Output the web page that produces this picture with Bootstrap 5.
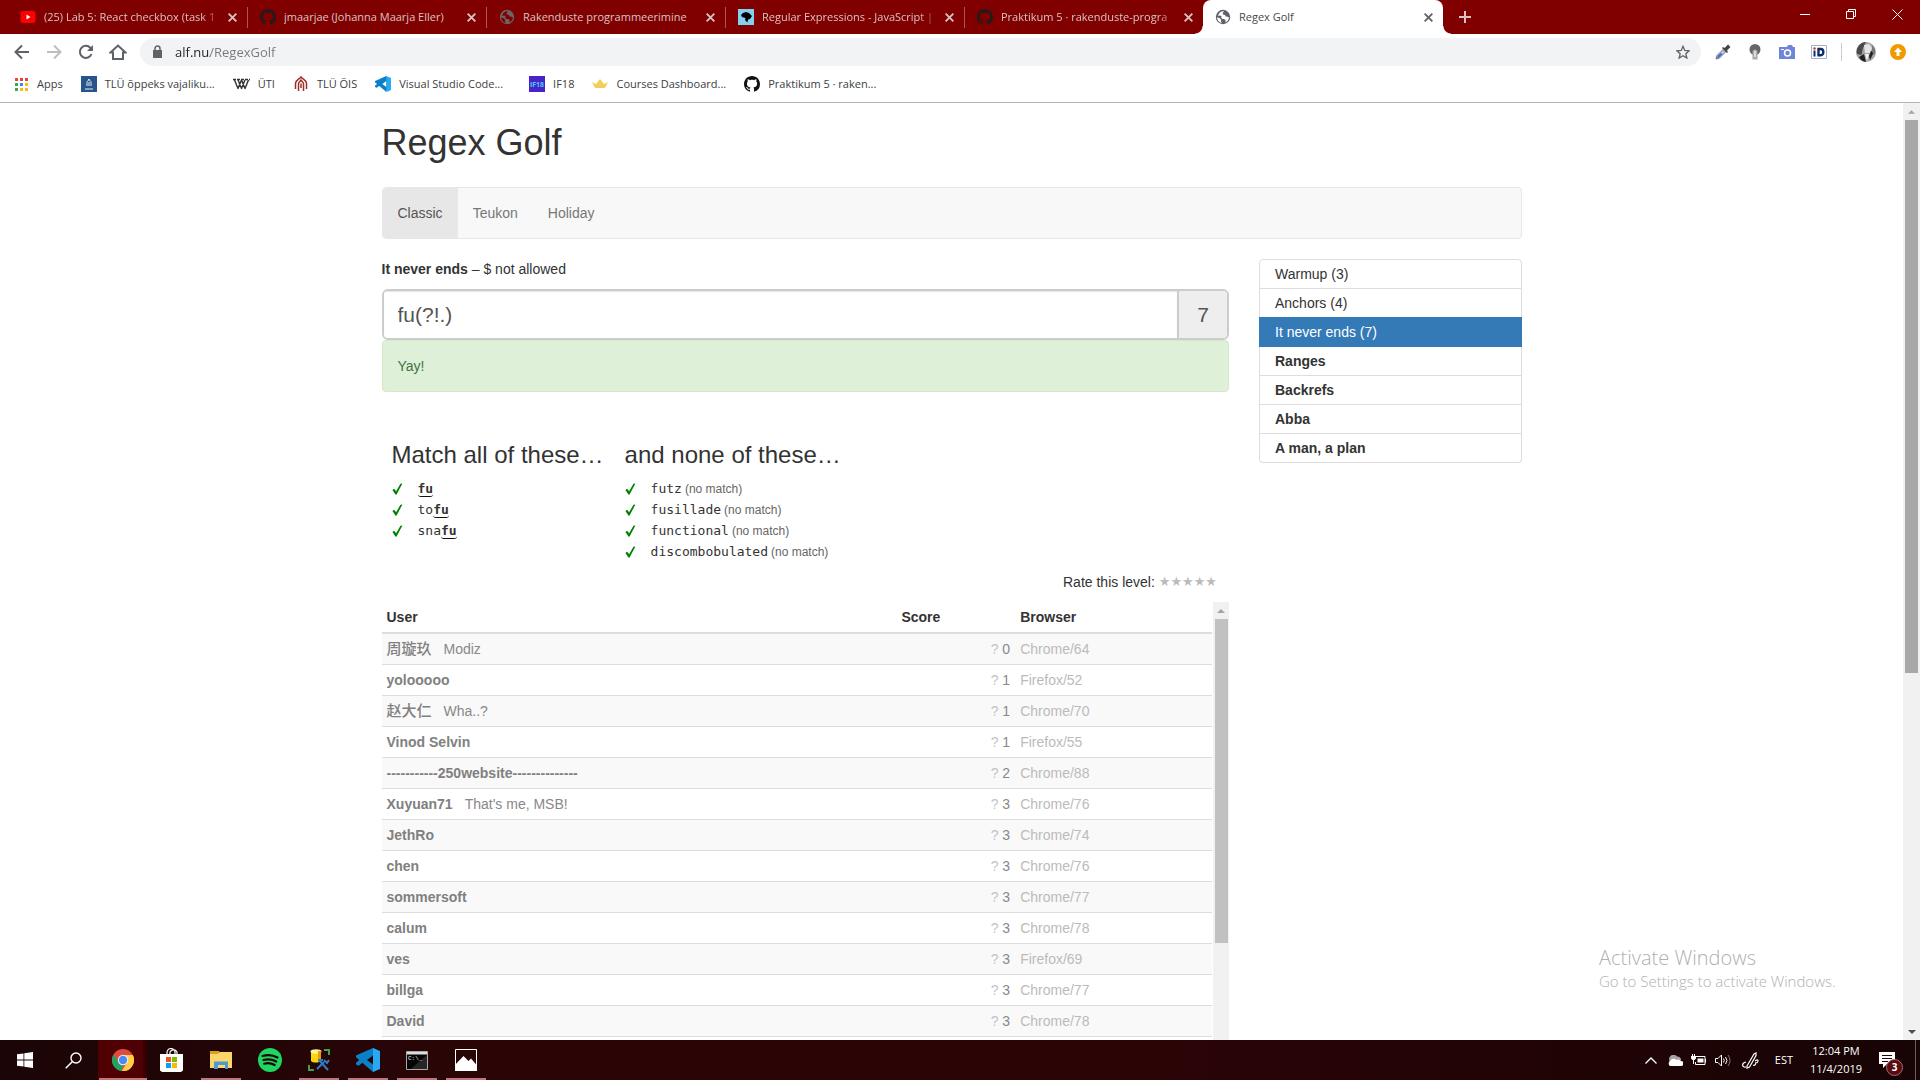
<!DOCTYPE html>
<html lang="en">
<head>
<meta charset="utf-8">
<meta name="viewport" content="width=device-width, initial-scale=1">
<title>Regex Golf</title>
<link href="https://cdn.jsdelivr.net/npm/bootstrap@5.3.0/dist/css/bootstrap.min.css" rel="stylesheet">
<script src="https://cdn.jsdelivr.net/npm/bootstrap@5.3.0/dist/js/bootstrap.bundle.min.js"></script>
<style>
  :root { --ui: "Open Sans", "Noto Sans", sans-serif; --page: "Liberation Sans", Arial, "Noto Sans CJK SC", sans-serif; }
  body { font-family: var(--page); font-size: 14px; line-height: 20px; color: #333; }
  svg { display: block; flex: none; }
  button { line-height: inherit; }
  .chrome-ui { font-family: var(--ui); font-size: 11px; line-height: 16px; }

  /* tab strip */
  .tabstrip { background: #800000; height: 34px; }
  .tab { width: 239px; flex: 0 1 239px; padding: 0 9px 0 12px; color: #d9c3c3; position: relative; }
  .tab + .tab:not(.current) { border-left: 1px solid #a95757; border-image: linear-gradient(transparent 22%, #a95757 22%, #a95757 80%, transparent 80%) 1; }
  .tab-title { flex: 1 1 0; overflow: hidden; white-space: nowrap; margin: 0 4px 0 8px; color: inherit; text-decoration: none; }
  .tab-title.fades { -webkit-mask-image: linear-gradient(90deg, #000 88%, transparent); }
  .tab.current { background: #fff; color: #45484c; border-radius: 8px 8px 0 0; flex-basis: 240px; }
  .tab.current::before, .tab.current::after { content: ""; position: absolute; bottom: 0; width: 8px; height: 8px; }
  .tab.current::before { left: -8px; background: radial-gradient(circle at 0 0, transparent 7px, #fff 8px); }
  .tab.current::after { right: -8px; background: radial-gradient(circle at 100% 0, transparent 7px, #fff 8px); }
  .plain { border: 0; background: none; padding: 0; color: inherit; display: flex; align-items: center; justify-content: center; flex: none; }
  .win-btn { width: 46px; height: 28px; color: #fff; }

  /* toolbar */
  .toolbar { height: 36px; color: #5f6368; padding: 0 14px; gap: 14px; }
  .toolbar-end { gap: 14px; }
  .divider { width: 1px; height: 18px; background: #ccc; }
  .omnibox { background: #f1f3f4; border-radius: 14px; height: 28px; padding: 0 11px 0 12px; }
  .omnibox input { border: 0; outline: 0; width: 100%; font-size: 13px; color: transparent; background: linear-gradient(90deg, #202124 35px, #77797c 35px); -webkit-background-clip: text; background-clip: text; }
  .tool-btn { width: 16px; height: 20px; }
  .bookmarks { height: 33px; padding: 0 14px 4px; gap: 18px; border-bottom: 1px solid #b6b4b6; color: #3c4043; }
  .bookmarks a { color: inherit; text-decoration: none; gap: 8px; white-space: nowrap; flex: none; }

  /* scrollbars */
  .rail { background: #f1f1f1; color: #505050; flex: none; }
  .rail-cap { height: 17px; }
  .page-rail { width: 17px; }
  .page-thumb { background: #a8a8a8; flex: 0 0 59%; margin: 0 2px; }
  .box-rail { width: 16px; }
  .box-thumb { background: #c1c1c1; flex: 0 0 324px; margin: 0 1px 0 2px; }

  /* page */
  .golf { max-width: 1170px; padding: 20px 15px 0; }
  h1 { font-size: 36px; line-height: 40px; font-weight: 400; margin-bottom: 24px; }
  h2 { font-size: 24px; line-height: 26px; font-weight: 400; margin-bottom: 10px; }
  .golf-nav { background: #f8f8f8; border: 1px solid #e7e7e7; border-radius: 4px; min-height: 52px; overflow: hidden; margin-bottom: 20px; }
  .golf-nav .nav-link { padding: 15px; color: #777; }
  .golf-nav .nav-link.active { background: #e7e7e7; color: #555; }
  .golf-row { --bs-gutter-x: 30px; }
  .entry { height: 51px; margin-top: 10px; border: 2px solid #ccc; border-radius: 6px; overflow: hidden; font-size: 21px; color: #555; }
  .entry input { border: 0; padding: 0 14px; font-size: 21px; color: #555; box-shadow: inset 0 1px 1px rgba(0,0,0,.1); border-radius: 0; }
  .entry output { width: 50px; background: #eee; border-left: 2px solid #ccc; }
  .golf-alert { background: #dff0d8; color: #3c763d; border: 1px solid #d6e9c6; border-radius: 4px; padding: 15px; }
  .words { padding: 50px 10px 10px; gap: 21px; }
  .words li { height: 21px; gap: 15px; }
  .word { font-family: "DejaVu Sans Mono", monospace; font-size: 13px; }
  .word b { border-bottom: 1px solid #111; border-radius: 3px; }
  .nomatch { font-size: 12px; color: #666; margin-left: -12px; }
  .rate { padding-right: 12px; margin-bottom: 10px; }
  .rate button { font-family: "DejaVu Sans", sans-serif; font-size: 13px; color: #bbb; display: inline; }
  .scorebox { height: 500px; gap: 1px; }
  .scores { table-layout: fixed; --bs-table-striped-bg: #f9f9f9; --bs-table-striped-color: #888; margin: 0; border-color: #ddd; }
  .scores > :not(caption) > * > * { padding: 5px; color: #888; }
  .scores > thead > tr > th { padding: 5px; color: #333; border-bottom: 2px solid #ddd; }
  .scores > tbody > tr > td:last-child { color: #bbb; }
  .scores > tbody > tr > td b { margin-right: 12px; color: #808080; }
  .scores b:lang(zh) { font-size: 15px; line-height: 16px; font-weight: 500; font-family: "Noto Sans CJK SC", sans-serif; }
  .scores i { font-style: normal; color: #c4c4c4; }
  .levels { --bs-list-group-border-color: #ddd; --bs-list-group-color: #333; --bs-list-group-action-color: #333; --bs-list-group-border-radius: 4px; --bs-list-group-active-bg: #337ab7; --bs-list-group-active-border-color: #337ab7; --bs-list-group-item-padding-x: 15px; --bs-list-group-item-padding-y: 4px; }
  .watermark { right: 68px; bottom: 48px; color: #b0b0b0; font-family: var(--ui); width: 253px; font-size: 15px; line-height: 22px; font-weight: 300; }
  .watermark strong { display: block; font-size: 20px; font-weight: 300; line-height: 24px; }

  /* taskbar */
  .taskbar { height: 40px; background: linear-gradient(90deg, #1b0506, #2b0506 25%, #2b0406 60%, #170405); color: #fff; font-family: var(--ui); font-size: 11px; }
  .task { width: 49px; height: 40px; position: relative; }
  .task.open::after { content: ""; position: absolute; left: 5px; right: 4px; bottom: 0; height: 2px; background: #bd777d; }
  .task.focused { background: linear-gradient(90deg, #500003 45px, #380003 45px); }
  .task.focused::after { left: 1px; right: 0; }
  .tray { gap: 8px; }
  .clock { line-height: 18px; width: 54px; }
  .notice { width: 24px; height: 24px; position: relative; }
  .notice-count { position: absolute; left: 11px; top: 11px; width: 17px; height: 17px; border-radius: 50%; background: #5b0a0e; border: 1px solid #a07074; font-size: 10px; line-height: 14px; font-weight: 700; }
  .peek { width: 5px; height: 40px; border-left: 1px solid #6b5c5d; }
</style>
</head>
<body class="vh-100 d-flex flex-column overflow-hidden bg-white">

<svg width="0" height="0" class="position-absolute" aria-hidden="true">
  <symbol id="octo" viewBox="0 0 16 16"><path fill="currentColor" d="M8 0C3.58 0 0 3.58 0 8c0 3.54 2.29 6.53 5.47 7.59.4.07.55-.17.55-.38 0-.19-.01-.82-.01-1.49-2.01.37-2.53-.49-2.69-.94-.09-.23-.48-.94-.82-1.13-.28-.15-.68-.52-.01-.53.63-.01 1.08.58 1.23.82.72 1.21 1.87.87 2.33.66.07-.52.28-.87.51-1.07-1.78-.2-3.64-.89-3.64-3.95 0-.87.31-1.59.82-2.15-.08-.2-.36-1.02.08-2.12 0 0 .67-.21 2.2.82.64-.18 1.32-.27 2-.27s1.36.09 2 .27c1.53-1.04 2.2-.82 2.2-.82.44 1.1.16 1.92.08 2.12.51.56.82 1.27.82 2.15 0 3.07-1.87 3.75-3.65 3.95.29.25.54.73.54 1.48 0 1.07-.01 1.93-.01 2.2 0 .21.15.46.55.38A8.01 8.01 0 0 0 16 8c0-4.42-3.58-8-8-8z"/></symbol>
  <symbol id="globe" viewBox="0 0 16 16"><circle cx="8" cy="8" r="7.2" fill="currentColor"/><path fill="var(--cut)" d="M9.2 2.2 7.6 4.1 8 5.4l2 .5.7 1.5 2 .3 1.3.9A6 6 0 0 1 10.4 13.400l.2-2.200-1.500-1.100-1.600-.1L6.200 8.700 6.500 7 4.800 6.600 3 6.900A6 6 0 0 1 9.200 2.200zM2 8.300l2.700 1 1.500 1.400-.2 1.500.8 1.700A6 6 0 0 1 2 8.300z"/></symbol>
  <symbol id="cross" viewBox="0 0 10 10"><path d="M1.500 1.500l7 7m0-7l-7 7" stroke="currentColor" stroke-width="1.700"/></symbol>
  <symbol id="code" viewBox="0 0 24 24"><path fill="#0b7fc7" d="M17 0l1 5v14l-1 5L0 9.200V7.600l2.700-1.300z"/><path fill="#0b7fc7" d="M0 16.400 2.700 17.700 17.500 6V0L0 14.800z"/><path fill="var(--hole,#fff)" d="M17 7.500 11 12l6 4.500z"/><path fill="#2aa9f2" d="M17 0l7 3v18l-7 3z"/></symbol>
  <symbol id="tick" viewBox="0 0 11 13"><path fill="#008000" d="M0 7.600 1.800 6.200 4 9 8.700.8 10.800.6 4.500 12.400 3.500 12.600z"/></symbol>
  <symbol id="up" viewBox="0 0 8 4"><path fill="currentColor" d="M4 0l4 4H0z"/></symbol>
  <symbol id="arch" viewBox="0 0 16 16"><path fill="none" stroke="currentColor" stroke-width="1.500" d="M2.500 13V7.500C2.500 4 6 3.500 8 1c2 2.500 5.500 3 5.500 6.500V13M5.500 15V8c0-2 1.500-2.200 2.500-3.800C9 5.800 10.500 6 10.500 8v7M8 7.500V12"/></symbol>
</svg>

<header class="chrome-ui flex-shrink-0">
  <div class="tabstrip d-flex">
    <nav class="d-flex flex-grow-1 ps-2" aria-label="Tabs">
      <div class="tab d-flex align-items-center">
        <svg width="16" height="12" viewBox="0 0 16 12"><rect x=".5" width="15" height="12" rx="3" fill="red"/><path d="M6.500 3.500v5l4-2.500z" fill="#fff"/></svg>
        <a class="tab-title fades" href="#">(25) Lab 5: React checkbox (task 1</a>
        <button class="plain" aria-label="Close tab"><svg width="11" height="11"><use href="#cross"/></svg></button>
      </div>
      <div class="tab d-flex align-items-center">
        <svg width="16" height="16" color="#24191b"><use href="#octo"/></svg>
        <a class="tab-title" href="#">jmaarjae (Johanna Maarja Eller)</a>
        <button class="plain" aria-label="Close tab"><svg width="11" height="11"><use href="#cross"/></svg></button>
      </div>
      <div class="tab d-flex align-items-center">
        <svg width="16" height="16" color="#6b6366" style="--cut:#800000"><use href="#globe"/></svg>
        <a class="tab-title" href="#">Rakenduste programmeerimine</a>
        <button class="plain" aria-label="Close tab"><svg width="11" height="11"><use href="#cross"/></svg></button>
      </div>
      <div class="tab d-flex align-items-center">
        <svg width="16" height="16" viewBox="0 0 16 16"><path fill="#83d0f2" d="M0 0h16v16H0z"/><path d="M3 6 5 4l3-1 3 1 3 3-2 3-2 .5-.5 3L7 11l.5-2L4 8z"/></svg>
        <a class="tab-title fades" href="#">Regular Expressions - JavaScript |</a>
        <button class="plain" aria-label="Close tab"><svg width="11" height="11"><use href="#cross"/></svg></button>
      </div>
      <div class="tab d-flex align-items-center">
        <svg width="16" height="16" color="#24191b"><use href="#octo"/></svg>
        <a class="tab-title fades" href="#">Praktikum 5 · rakenduste-progra</a>
        <button class="plain" aria-label="Close tab"><svg width="11" height="11"><use href="#cross"/></svg></button>
      </div>
      <div class="tab current d-flex align-items-center">
        <svg width="16" height="16" color="#5f6368" style="--cut:#fff"><use href="#globe"/></svg>
        <a class="tab-title" href="#">Regex Golf</a>
        <button class="plain" aria-label="Close tab"><svg width="11" height="11" color="#5f6368"><use href="#cross"/></svg></button>
      </div>
      <button class="plain ms-3" aria-label="New tab"><svg width="12" height="12" viewBox="0 0 12 12"><path d="M6 0v12M0 6h12" stroke="#d9c3c3" stroke-width="2"/></svg></button>
    </nav>
    <button class="plain win-btn" aria-label="Minimize"><svg width="10" height="10"><path d="M0 5.500h10" stroke="#fff"/></svg></button>
    <button class="plain win-btn" aria-label="Restore"><svg width="10" height="10"><path d="M.5 2.500h7v7h-7zM2.500 2.500v-2h7v7h-2" fill="none" stroke="#fff"/></svg></button>
    <button class="plain win-btn" aria-label="Close"><svg width="11" height="11"><path d="M.5.5l10 10m0-10l-10 10" stroke="#fff"/></svg></button>
  </div>

  <div class="toolbar d-flex align-items-center">
    <div class="d-flex gap-3">
      <button class="plain tool-btn" aria-label="Back"><svg width="16" height="16" viewBox="0 0 16 16"><path d="M15 8H2m6-6.500L1.500 8 8 14.500" fill="none" stroke="currentColor" stroke-width="2"/></svg></button>
      <button class="plain tool-btn" aria-label="Forward"><svg width="16" height="16" viewBox="0 0 16 16"><path d="M1 8h13M8 1.500 14.500 8 8 14.500" fill="none" stroke="#bcbec0" stroke-width="2"/></svg></button>
      <button class="plain tool-btn" aria-label="Reload"><svg width="16" height="16" viewBox="0 0 16 16"><path d="M13.500 10A6 6 0 1 1 12.300 3.800L14 5.500" fill="none" stroke="currentColor" stroke-width="2"/><path d="M15 1v6H9z" fill="currentColor"/></svg></button>
      <button class="plain tool-btn" aria-label="Home"><svg width="18" height="16" viewBox="0 0 18 16"><path d="M1.500 8.500 9 1.500l7.500 7H14V15H4V8.500z" fill="none" stroke="currentColor" stroke-width="2"/></svg></button>
    </div>
    <div class="omnibox d-flex align-items-center flex-grow-1 gap-2">
      <svg width="11" height="14" viewBox="0 0 11 14"><path d="M1 5h9v8H1z" fill="currentColor"/><path d="M3 5V3.500a2.500 2.500 0 0 1 5 0V5" fill="none" stroke="currentColor" stroke-width="1.500"/></svg>
      <label class="visually-hidden" for="address">Address</label>
      <input id="address" class="p-0 ms-1" type="text" value="alf.nu/RegexGolf">
      <button class="plain" aria-label="Bookmark this page"><svg width="14" height="14" viewBox="0 0 16 16"><path d="M8 1.500l2 4.700 5 .4-3.800 3.300 1.200 5L8 12.200 3.600 14.900l1.200-5L1 6.600l5-.4z" fill="none" stroke="currentColor" stroke-width="1.500"/></svg></button>
    </div>
    <div class="toolbar-end d-flex align-items-center">
      <div class="d-flex gap-3">
        <button class="plain tool-btn" aria-label="Color picker"><svg width="16" height="16" viewBox="0 0 16 16"><path d="M1 15l1-3.500 6-6L10.500 8l-6 6z" fill="#b9c6ee" stroke="#777" /><path d="M2 14.300l1-2.800 3-2.500 1.500 1-3.500 3.500z" fill="#3b62d8"/><path d="M7 4l5 5 1-1-1-1.500L15.500 3 13 .5 9.500 4 8 3z" fill="#444"/></svg></button>
        <button class="plain tool-btn" aria-label="Lamp"><svg width="12" height="16" viewBox="0 0 12 16"><circle cx="6" cy="5.500" r="5.500" fill="#666"/><path d="M3.500 15.500V8a2.500 2.500 0 0 1 5 0v7.500z" fill="#aaa"/><path d="M6 7v6" stroke="#eee" stroke-width="1.500"/></svg></button>
        <button class="plain tool-btn" aria-label="Screenshot"><svg width="16" height="14" viewBox="0 0 16 14"><path d="M0 2h8l1-2h4l1 2h2v12H0z" fill="#6d86d9"/><circle cx="8.500" cy="8" r="3" fill="none" stroke="#fff" stroke-width="1.500"/><path d="M2 4.500h3" stroke="#fff"/></svg></button>
        <button class="plain tool-btn" aria-label="ID card"><svg width="16" height="14" viewBox="0 0 16 14"><path d="M.5.500h15v13H.5z" fill="#fff" stroke="#9db2cc"/><path d="M3.500 5.500v6" stroke="#0a2f66" stroke-width="2"/><circle cx="3.500" cy="3.500" r="1.300" fill="#e33b2e"/><path d="M7.500 4h2.200c3.500 0 3.500 6.300 0 6.300H7.500z" fill="none" stroke="#0a2f66" stroke-width="2.400"/></svg></button>
      </div>
      <span class="divider"></span>
      <button class="plain" aria-label="Profile"><svg width="20" height="20" viewBox="0 0 20 20"><circle cx="10" cy="10" r="10" fill="#a5a5a5"/><path d="M2.500 4A10 10 0 0 1 10 0L7 6 5.500 13 1 12a10 10 0 0 1 1.500-8z" fill="#4a4a4a"/><path d="M8 3l5-1 3 4-2 5-5 0z" fill="#e4e4e4"/><path d="M3 15l5-3 2 8a9 9 0 0 1-7-5zM15 9l3 1-4 8-1-4z" fill="#222"/><path d="M9 12l4 0-2 7z" fill="#f4f4f4"/><path d="M16 3l3 4 0 6-3-3z" fill="#777"/></svg></button>
      <button class="plain" aria-label="Update"><svg width="16" height="16" viewBox="0 0 16 16"><circle cx="8" cy="8" r="8" fill="#f29900"/><path d="M8 3.500 12 8H9.500v4h-3V8H4z" fill="#fff"/></svg></button>
    </div>
  </div>

  <nav class="bookmarks d-flex align-items-center" aria-label="Bookmarks">
    <a href="#" class="d-flex align-items-center"><svg width="15" height="15" viewBox="0 0 15 15"><path fill="#e8453c" d="M1 1h3v3H1zM6 1h3v3H6zM11 1h3v3h-3z"/><path fill="#3aa757" d="M1 6h3v3H1zM1 11h3v3H1z"/><path fill="#4285f4" d="M6 6h3v3H6z"/><path fill="#f9bc15" d="M11 6h3v3h-3zM6 11h3v3H6zM11 11h3v3h-3z"/></svg>Apps</a>
    <a href="#" class="d-flex align-items-center"><svg width="16" height="16" viewBox="0 0 16 16"><path fill="#28548c" d="M0 0h16v16H0z"/><path d="M6 10V6.500C6 5 8 4.500 8 3c0 1.500 2 2 2 3.500V10M8 6v4M4 13h8" stroke="#fff" fill="none" stroke-width=".9"/></svg>TLÜ õppeks vajaliku...</a>
    <a href="#" class="d-flex align-items-center"><svg width="17" height="14" viewBox="0 0 17 14"><path d="M1.500 3 5 11.500 8.500 3M5 3l3.500 8.500L12 3M8.500 3 12 11.500 15.500 3" fill="none" stroke="#333" stroke-width="1.400" stroke-linejoin="round"/><path d="M0 2.500h17" stroke="#333" stroke-width="1.300" stroke-dasharray="3 1"/></svg>ÜTI</a>
    <a href="#" class="d-flex align-items-center"><svg width="16" height="16" color="#9c2f2a"><use href="#arch"/></svg>TLÜ ÕIS</a>
    <a href="#" class="d-flex align-items-center pe-2"><svg width="16" height="16"><use href="#code"/></svg>Visual Studio Code...</a>
    <a href="#" class="d-flex align-items-center"><svg width="16" height="16" viewBox="0 0 16 16"><path fill="#4a22c8" d="M0 0h16v16H0z"/><text x="8" y="11" text-anchor="middle" font-size="7" font-weight="700" fill="#38d5f5">IF18</text></svg>IF18</a>
    <a href="#" class="d-flex align-items-center"><svg width="16" height="12" viewBox="0 0 16 12"><path fill="#f0cf5a" d="M3 10 0 4l4 2 4-5 4 5 4-2-3 6z"/></svg>Courses Dashboard...</a>
    <a href="#" class="d-flex align-items-center"><svg width="16" height="16" color="#111"><use href="#octo"/></svg>Praktikum 5 · raken...</a>
  </nav>
</header>

<div class="d-flex flex-grow-1 overflow-hidden position-relative" style="min-height:0">
  <main class="flex-grow-1">
    <div class="golf mx-auto">
      <h1>Regex Golf</h1>
      <nav class="golf-nav nav" aria-label="Courses">
        <a class="nav-link active" href="#">Classic</a>
        <a class="nav-link" href="#">Teukon</a>
        <a class="nav-link" href="#">Holiday</a>
      </nav>
      <div class="row golf-row">
        <section class="col-9">
          <label class="d-block" for="pattern"><b>It never ends</b> – $ not allowed</label>
          <div class="entry d-flex">
            <input id="pattern" class="form-control" type="text" value="fu(?!.)">
            <output class="d-flex align-items-center justify-content-center flex-shrink-0" for="pattern">7</output>
          </div>
          <div class="golf-alert" role="status">Yay!</div>
          <div class="words d-flex">
            <div>
              <h2>Match all of these…</h2>
              <ul class="list-unstyled m-0">
                <li class="d-flex align-items-center"><svg width="11" height="12"><use href="#tick"/></svg><span class="word"><b>fu</b></span></li>
                <li class="d-flex align-items-center"><svg width="11" height="12"><use href="#tick"/></svg><span class="word">to<b>fu</b></span></li>
                <li class="d-flex align-items-center"><svg width="11" height="12"><use href="#tick"/></svg><span class="word">sna<b>fu</b></span></li>
              </ul>
            </div>
            <div>
              <h2>and none of these…</h2>
              <ul class="list-unstyled m-0">
                <li class="d-flex align-items-center"><svg width="11" height="12"><use href="#tick"/></svg><span class="word">futz</span><span class="nomatch">(no match)</span></li>
                <li class="d-flex align-items-center"><svg width="11" height="12"><use href="#tick"/></svg><span class="word">fusillade</span><span class="nomatch">(no match)</span></li>
                <li class="d-flex align-items-center"><svg width="11" height="12"><use href="#tick"/></svg><span class="word">functional</span><span class="nomatch">(no match)</span></li>
                <li class="d-flex align-items-center"><svg width="11" height="12"><use href="#tick"/></svg><span class="word">discombobulated</span><span class="nomatch">(no match)</span></li>
              </ul>
            </div>
          </div>
          <div class="rate d-flex justify-content-end">Rate this level:&nbsp;
            <button class="plain" aria-label="1 star">★</button><button class="plain" aria-label="2 stars">★</button><button class="plain" aria-label="3 stars">★</button><button class="plain" aria-label="4 stars">★</button><button class="plain" aria-label="5 stars">★</button>
          </div>
          <div class="scorebox d-flex">
            <div class="flex-grow-1">
              <table class="table table-striped scores">
                <colgroup><col style="width:62%"><col style="width:14.3%"><col></colgroup>
                <thead><tr><th>User</th><th>Score</th><th>Browser</th></tr></thead>
                <tbody>
                  <tr><td><b lang="zh">周璇玖</b>Modiz</td><td class="text-end"><i>?</i> 0</td><td>Chrome/64</td></tr>
                  <tr><td><b>yolooooo</b></td><td class="text-end"><i>?</i> 1</td><td>Firefox/52</td></tr>
                  <tr><td><b lang="zh">赵大仁</b>Wha..?</td><td class="text-end"><i>?</i> 1</td><td>Chrome/70</td></tr>
                  <tr><td><b>Vinod Selvin</b></td><td class="text-end"><i>?</i> 1</td><td>Firefox/55</td></tr>
                  <tr><td><b>-----------250website--------------</b></td><td class="text-end"><i>?</i> 2</td><td>Chrome/88</td></tr>
                  <tr><td><b>Xuyuan71</b>That's me, MSB!</td><td class="text-end"><i>?</i> 3</td><td>Chrome/76</td></tr>
                  <tr><td><b>JethRo</b></td><td class="text-end"><i>?</i> 3</td><td>Chrome/74</td></tr>
                  <tr><td><b>chen</b></td><td class="text-end"><i>?</i> 3</td><td>Chrome/76</td></tr>
                  <tr><td><b>sommersoft</b></td><td class="text-end"><i>?</i> 3</td><td>Chrome/77</td></tr>
                  <tr><td><b>calum</b></td><td class="text-end"><i>?</i> 3</td><td>Chrome/78</td></tr>
                  <tr><td><b>ves</b></td><td class="text-end"><i>?</i> 3</td><td>Firefox/69</td></tr>
                  <tr><td><b>billga</b></td><td class="text-end"><i>?</i> 3</td><td>Chrome/77</td></tr>
                  <tr><td><b>David</b></td><td class="text-end"><i>?</i> 3</td><td>Chrome/78</td></tr>
                </tbody>
              </table>
            </div>
            <div class="rail box-rail d-flex flex-column" aria-hidden="true">
              <div class="rail-cap d-flex align-items-center justify-content-center"><svg width="8" height="4" color="#a3a3a3"><use href="#up"/></svg></div>
              <div class="box-thumb"></div>
            </div>
          </div>
        </section>
        <aside class="col-3">
          <div class="list-group levels">
            <a href="#" class="list-group-item list-group-item-action">Warmup (3)</a>
            <a href="#" class="list-group-item list-group-item-action">Anchors (4)</a>
            <a href="#" class="list-group-item list-group-item-action active">It never ends (7)</a>
            <a href="#" class="list-group-item list-group-item-action fw-bold">Ranges</a>
            <a href="#" class="list-group-item list-group-item-action fw-bold">Backrefs</a>
            <a href="#" class="list-group-item list-group-item-action fw-bold">Abba</a>
            <a href="#" class="list-group-item list-group-item-action fw-bold">A man, a plan</a>
          </div>
        </aside>
      </div>
    </div>
  </main>
  <div class="rail page-rail d-flex flex-column" aria-hidden="true">
    <div class="rail-cap d-flex align-items-center justify-content-center"><svg width="7" height="4" color="#a3a3a3"><use href="#up"/></svg></div>
    <div class="page-thumb"></div>
    <div class="rail-cap d-flex align-items-center justify-content-center mt-auto"><svg width="8" height="4" viewBox="0 0 8 4"><path fill="currentColor" d="M0 0h8L4 4z"/></svg></div>
  </div>
  <div class="watermark position-absolute"><strong>Activate Windows</strong>Go to Settings to activate Windows.</div>
</div>

<footer class="taskbar d-flex justify-content-between flex-shrink-0">
  <div class="d-flex">
    <button class="plain task" aria-label="Start"><svg width="16" height="16" viewBox="0 0 16 16"><path fill="#fff" d="M0 2.300 6.500 1.400v6.200H0zM7.300 1.300 16 0v7.600H7.300zM0 8.400h6.500v6.200L0 13.700zM7.300 8.400H16V16l-8.700-1.200z"/></svg></button>
    <button class="plain task" aria-label="Search"><svg width="17" height="17" viewBox="0 0 17 17"><circle cx="11" cy="6" r="5" fill="none" stroke="#fff" stroke-width="1.400"/><path d="M7.500 9.500.7 16.300" stroke="#fff" stroke-width="1.500"/></svg></button>
    <button class="plain task open focused" aria-label="Chrome"><svg width="22" height="22" viewBox="0 0 22 22"><circle cx="11" cy="11" r="11" fill="#dd4b3e"/><path fill="#1da462" d="M1.500 5.500 6.700 13.500 11 16l-1.500 6A11 11 0 0 1 1.500 5.500z"/><path fill="#ffcd46" d="M11 6h9.800A11 11 0 0 1 9.600 22L15.300 13.500z"/><circle cx="11" cy="11" r="5.200" fill="#f1f1f1"/><circle cx="11" cy="11" r="4.200" fill="#4a8af4"/></svg></button>
    <button class="plain task" aria-label="Store"><svg width="23" height="24" viewBox="0 0 23 24"><path d="M7 7V4.500a4 4 0 0 1 8 0V7M10 7V4a4 4 0 0 1 7 0v3" fill="none" stroke="#fff" stroke-width="1.200"/><path d="M0 6h23v16.500L21 24H2l-2-1.500z" fill="#fff"/><path fill="#f25022" d="M6 9h5v5H6z"/><path fill="#7fba00" d="M12 9h5v5h-5z"/><path fill="#00a4ef" d="M6 15h5v5H6z"/><path fill="#ffb900" d="M12 15h5v5h-5z"/></svg></button>
    <button class="plain task open" aria-label="File Explorer"><svg width="22" height="18" viewBox="0 0 22 18"><path fill="#d9a317" d="M0 0h9l1 2v3H0z"/><path fill="#fbd769" d="M0 3h8l2-2h12v16H0z"/><path fill="#4a9ad4" d="M4 10.500h14V18h-3v-4H8v4H4z"/></svg></button>
    <button class="plain task" aria-label="Spotify"><svg width="24" height="24" viewBox="0 0 24 24"><circle cx="12" cy="12" r="12" fill="#1ed760"/><path d="M4.500 8c5-1.500 10.500-1 15 1.500M5.500 12c4.500-1.300 9-.7 12.700 1.500M6.200 15.700c4-1 7.300-.5 10.500 1.300" fill="none" stroke="#1b0708" stroke-width="2.200" stroke-linecap="round"/></svg></button>
    <button class="plain task open" aria-label="SQL Server Management Studio"><svg width="22" height="22" viewBox="0 0 22 22"><path d="M16 1h5v5M1 16v5h5" fill="none" stroke="#46a04a" stroke-width="2"/><path fill="#fcd50c" d="M3 2v10c2 2 7 2 10 0V2z"/><ellipse cx="8" cy="2.500" rx="5.500" ry="2.300" fill="#fdf0a0"/><path d="M10 2v11l3-1V2z" fill="#e89d00"/><path d="M9 20l7-7m-5-2 9 10M10 11h5M16 11l3 3 2-3" stroke="#2f7cc4" stroke-width="2" fill="none"/></svg></button>
    <button class="plain task open" aria-label="Visual Studio Code"><svg width="24" height="24" style="--hole:#25060a"><use href="#code"/></svg></button>
    <button class="plain task open" aria-label="Command Prompt"><svg width="22" height="19" viewBox="0 0 22 19"><path d="M.5.500h21v18H.5z" fill="#050505" stroke="#a9a9a9"/><path d="M1 1h20v2.500H1z" fill="#ddd"/><path d="M14 10l7-6v14H5z" fill="#262626"/><text x="2" y="9" font-size="6" fill="#eee" font-family="Liberation Mono, monospace">C:\_</text></svg></button>
    <button class="plain task open" aria-label="Photos"><svg width="22" height="22" viewBox="0 0 22 22"><path d="M.5.500h21v21H.5z" fill="none" stroke="#fff"/><path d="M0 16 8.500 7l5 5L16 9.500l6 7V22H0z" fill="#fff"/></svg></button>
  </div>
  <div class="tray d-flex align-items-center">
    <button class="plain tool-btn" aria-label="Show hidden icons"><svg width="12" height="7"><path d="M.5 6.500 6 1l5.500 5.500" fill="none" stroke="#fff" stroke-width="1.300"/></svg></button>
    <button class="plain tool-btn" aria-label="OneDrive"><svg width="16" height="11" viewBox="0 0 16 11"><path d="M3 7a4 4 0 0 1 7-5.500 3.500 3.500 0 0 1 4 4z" fill="#a9a1a2"/><path d="M3 11a3 3 0 0 1 0-5 4 4 0 0 1 6.500-1A3.500 3.500 0 0 1 14 6a2.500 2.500 0 0 1 0 5z" fill="#fff"/></svg></button>
    <button class="plain tool-btn" aria-label="Battery"><svg width="16" height="12" viewBox="0 0 16 12"><path d="M5 2.500h9v8H4.500V8M14.500 5v3.500" fill="none" stroke="#fff"/><path d="M6.500 4.500h6v4h-6z" fill="#fff"/><path d="M0 2h5v2.500L3.500 6h-2L0 4.500zM1 0h1v2H1zM3 0h1v2H3zM2 6h1v4H2z" fill="#fff"/></svg></button>
    <button class="plain tool-btn" aria-label="Volume"><svg width="16" height="13" viewBox="0 0 16 13"><path d="M.5 4.500h2.500L6.500 1v11L3 8.500H.5z" fill="none" stroke="#fff"/><path d="M8.500 4.500q1.500 2 0 4M10.500 3q3 3.500 0 7" fill="none" stroke="#fff"/><path d="M13 1q4 5.500 0 11" fill="none" stroke="#877"/></svg></button>
    <button class="plain tool-btn mx-1" aria-label="Windows Ink"><svg width="17" height="17" viewBox="0 0 17 17"><path d="M5 14 12 2l2-1 0 2.500L7.500 15 5 16zM4 10C-1 11 0 16 4 15M13 9c3-2 4-1 2 2M11 13c2 1 3-1 3-3" fill="none" stroke="#fff" stroke-width="1.200"/></svg></button>
    <button class="plain px-1" aria-label="Language">EST</button>
    <button class="plain clock text-center ms-1">12:04 PM<br>11/4/2019</button>
    <button class="plain notice ms-1 me-2" aria-label="Notifications"><svg width="16" height="16" viewBox="0 0 16 16"><path fill="#fff" d="M0 0h16v12H8l-4 4v-4H0z"/><path d="M3 3.500h10M3 6.500h10M3 9.500h6" stroke="#1b0506"/></svg><span class="notice-count">3</span></button>
    <span class="peek"></span>
  </div>
</footer>
</body>
</html>
